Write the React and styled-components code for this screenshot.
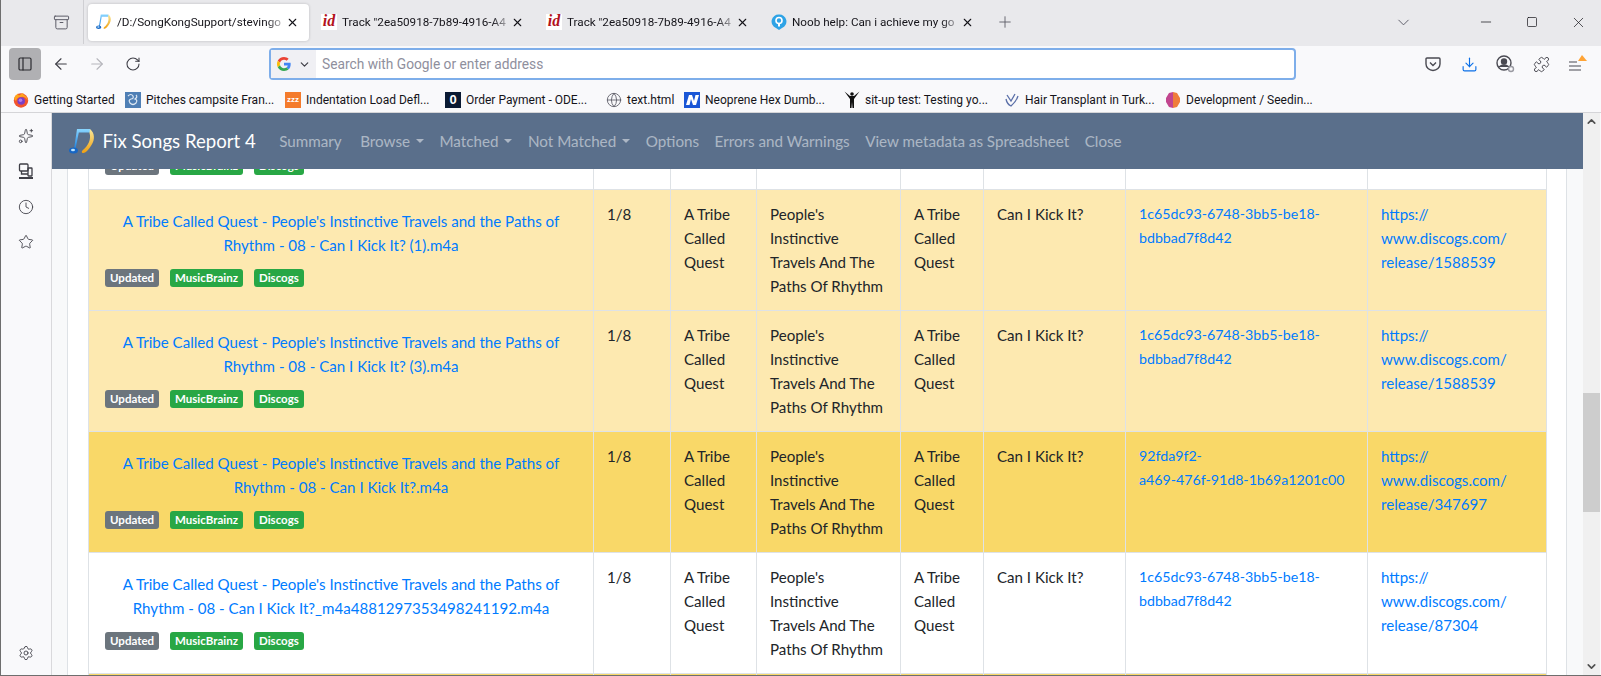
import React from 'react';
import styled, { createGlobalStyle } from 'styled-components';
import { Archive, ArrowLeft, ArrowRight, RotateCw, X, Plus, ChevronDown, Minus, Square, PanelLeft, Download, Puzzle, Sparkles, Clock, Star, Settings, Globe, ChevronUp } from 'lucide-react';

const GlobalStyle = createGlobalStyle`
  html, body { margin: 0; padding: 0; height: 100%; overflow: hidden; }
  body { font-family: Roboto, sans-serif; background: #f9f9fb; }
`;

const MusicLogo = ({ size = 16, id = 'a' }) => (
  <svg width={size} height={size} viewBox="0 0 27 27">
    <defs>
      <linearGradient id={`blue${id}`} x1="0" y1="0" x2="0" y2="1">
        <stop offset="0" stopColor="#8ad6ff" />
        <stop offset="1" stopColor="#1a7fe0" />
      </linearGradient>
      <linearGradient id={`gold${id}`} x1="0" y1="0" x2="0" y2="1">
        <stop offset="0" stopColor="#f9e89a" />
        <stop offset="1" stopColor="#f0a010" />
      </linearGradient>
    </defs>
    <path d="M8 1 H21 L21.500 4.500 H9.800 L6.500 21 H5 Z" fill={`url(#blue${id})`} />
    <ellipse cx="4.500" cy="22.500" rx="4.500" ry="3" fill="#1766c4" />
    <ellipse cx="4" cy="22" rx="2" ry="1.200" fill="#bfe6ff" />
    <path d="M21 1 C26 5 26 12 22.500 17 C20 21 17 25 14.500 25 C12 25 12.500 23 14.500 21.500 C19 18 22.500 11 20.500 5 Z" fill={`url(#gold${id})`} />
  </svg>
);

const tabs = [
  { title: '/D:/SongKongSupport/stevingo', icon: 'music', active: true },
  { title: 'Track "2ea50918-7b89-4916-A4', icon: 'id' },
  { title: 'Track "2ea50918-7b89-4916-A4', icon: 'id' },
  { title: 'Noob help: Can i achieve my go', icon: 'noob' },
];

const marks = [
  { label: 'Getting Started', w: 112, kind: 'fox' },
  { label: 'Pitches campsite Fran...', w: 160, kind: 'pitch' },
  { label: 'Indentation Load Defl...', w: 160, kind: 'zzz' },
  { label: 'Order Payment - ODE...', w: 161, kind: 'zero' },
  { label: 'text.html', w: 78, kind: 'globe' },
  { label: 'Neoprene Hex Dumb...', w: 160, kind: 'n' },
  { label: 'sit-up test: Testing yo...', w: 160, kind: 'man' },
  { label: 'Hair Transplant in Turk...', w: 161, kind: 'hair' },
  { label: 'Development / Seedin...', w: 160, kind: 'dev' },
];

const rows = [
  { file: "A Tribe Called Quest - People's Instinctive Travels and the Paths of Rhythm - 08 - Can I Kick It? (1).m4a", mb: ['1c65dc93-6748-3bb5-be18-', 'bdbbad7f8d42'], rel: '1588539', tone: 'light' },
  { file: "A Tribe Called Quest - People's Instinctive Travels and the Paths of Rhythm - 08 - Can I Kick It? (3).m4a", mb: ['1c65dc93-6748-3bb5-be18-', 'bdbbad7f8d42'], rel: '1588539', tone: 'light' },
  { file: "A Tribe Called Quest - People's Instinctive Travels and the Paths of Rhythm - 08 - Can I Kick It?.m4a", mb: ['92fda9f2-', 'a469-476f-91d8-1b69a1201c00'], rel: '347697', tone: 'dark' },
  { file: "A Tribe Called Quest - People's Instinctive Travels and the Paths of Rhythm - 08 - Can I Kick It?_m4a4881297353498241192.m4a", mb: ['1c65dc93-6748-3bb5-be18-', 'bdbbad7f8d42'], rel: '87304', tone: 'white' },
];

const toneColor = { light: '#fde9b0', dark: '#f9d868', white: '#ffffff' };

function Favicon({ kind }) {
  if (kind === 'fox') return (
    <svg width="16" height="16" viewBox="0 0 16 16">
      <circle cx="8" cy="8.500" r="7.200" fill="#f2542d" />
      <path d="M1 7 Q2 3 5 1.500 Q5 3 6 3.500 Q8 2 10 1 Q10 3 12.500 4 Q15 6 15 9 Q12 4 8 5 Q4 5 3 9 Z" fill="#ffa41c" />
      <circle cx="8.200" cy="9" r="3.800" fill="#7a3fc6" />
      <circle cx="7.500" cy="8.200" r="1.800" fill="#b47ae8" />
    </svg>
  );
  if (kind === 'pitch') return (
    <svg width="16" height="16" viewBox="0 0 16 16">
      <rect width="16" height="16" fill="#4f7fb5" />
      <path d="M3 4 Q6 1 8 4 Q9 7 6 7 Q3 8 5 11 Q8 14 11 11 Q13 8 10 7 Q13 5 11 3" stroke="#dfe9f4" strokeWidth="1.200" fill="none" />
    </svg>
  );
  if (kind === 'zzz') return <Zzz>zzz</Zzz>;
  if (kind === 'zero') return <Zero>0</Zero>;
  if (kind === 'globe') return <Globe size={16} color="#5b5b66" strokeWidth={1.3} />;
  if (kind === 'n') return <svg width="16" height="16" viewBox="0 0 16 16"><rect width="16" height="16" fill="#1a56d6" /><path d="M2 13 L5 3 H8 L10 9 L11.500 3 H15 L12 13 H9 L7 7 L5.500 13 Z" fill="#fff" /></svg>;
  if (kind === 'man') return <svg width="16" height="18" viewBox="0 0 16 18"><circle cx="8" cy="3" r="1.800" fill="#111" /><path d="M0.500 0.500 L6 5 H10 L15.500 0.500 L10 8 L10 17 H8.500 L8 11 L7.500 17 H6 L6 8 Z" fill="#111" /></svg>;
  if (kind === 'hair') return <svg width="16" height="16" viewBox="0 0 16 16" fill="none" stroke="#5a6fa8" strokeWidth="1.300"><path d="M2 7 Q3 12 7 14 Q12 10 14 4" /><path d="M3 3 L7 9 L11 2" /></svg>;
  if (kind === 'dev') return <svg width="14" height="16" viewBox="0 0 14 16"><path d="M7 0 L11 1 L14 6 V10 L11 15 L7 16 Z" fill="#ef7d3b" /><path d="M7 0 L3 1 L0 6 V10 L3 15 L7 16 Z" fill="#c2458f" /></svg>;
  return null;
}

function TabIcon({ icon, id }) {
  if (icon === 'music') return <MusicLogo size={16} id={id} />;
  if (icon === 'id') return <IdIcon>id</IdIcon>;
  return <svg width="16" height="16" viewBox="0 0 16 16"><path d="M8 0.500 A7 7 0 0 1 11 14 L8 16 L5 14 A7 7 0 0 1 8 0.500 Z" fill="#2ea3e6" /><circle cx="8" cy="6.500" r="3" fill="none" stroke="#fff" strokeWidth="1.600" /><rect x="7" y="10" width="2" height="2.500" fill="#fff" /></svg>;
}

const SyncedTabs = () => (
  <svg width="16" height="17" viewBox="0 0 16 17" fill="none" stroke="#3e3e46" strokeWidth="1.300">
    <rect x="1.500" y="1" width="8.500" height="7" rx="1" />
    <path d="M3.500 8 V11 H10" />
    <rect x="10" y="5" width="4" height="8" rx=".5" />
    <path d="M1 15 H15" strokeWidth="2" />
  </svg>
);

const MoreBadges = ({ clipped }) => (
  <Badges $clipped={clipped}>
    <Badge $kind="gray">Updated</Badge>
    <Badge>MusicBrainz</Badge>
    <Badge>Discogs</Badge>
  </Badges>
);

function App() {
  return (
    <>
      <GlobalStyle />
      <Window>
        <TabStrip>
          <ListAll><Archive size={17} strokeWidth={1.4} /></ListAll>
          {tabs.map((t, i) => (
            <Tab key={i} $active={t.active}>
              <TabIcon icon={t.icon} id={`t${i}`} />
              <TabTitle>{t.title}</TabTitle>
              <X size={13} strokeWidth={2} />
            </Tab>
          ))}
          <NewTab><Plus size={18} strokeWidth={1.2} /></NewTab>
          <Spacer />
          <TabsMenu><ChevronDown size={19} strokeWidth={1.2} color="#5b5b66" /></TabsMenu>
          <WinButton><Minus size={16} strokeWidth={1.1} /></WinButton>
          <WinButton><Square size={12} strokeWidth={1.4} /></WinButton>
          <WinButton><X size={17} strokeWidth={1} /></WinButton>
        </TabStrip>
        <Toolbar>
          <SideToggle><PanelLeft size={16} strokeWidth={1.8} /></SideToggle>
          <NavIcons>
            <IconSlot><ArrowLeft size={18} strokeWidth={1.5} color="#3e3e46" /></IconSlot>
            <IconSlot><ArrowRight size={18} strokeWidth={1.5} color="#b5b5bb" /></IconSlot>
            <IconSlot><RotateCw size={16} strokeWidth={1.6} color="#3e3e46" /></IconSlot>
          </NavIcons>
          <UrlBar>
            <Engine>
              <svg width="14" height="14" viewBox="0 0 48 48">
                <path fill="#EA4335" d="M24 9.500c3.500 0 6.700 1.300 9.100 3.400l6.800-6.800C35.900 2.400 30.400 0 24 0 14.600 0 6.500 5.400 2.600 13.200l7.900 6.200C12.400 13.700 17.700 9.500 24 9.500z" />
                <path fill="#4285F4" d="M46.900 24.500c0-1.600-.1-3.100-.4-4.500H24v9h12.900c-.6 3-2.200 5.500-4.700 7.200l7.700 6c4.500-4.200 7-10.300 7-17.700z" />
                <path fill="#FBBC05" d="M10.500 28.600c-.5-1.400-.8-3-.8-4.600s.3-3.200.8-4.600l-7.900-6.200C.9 16.500 0 20.100 0 24s.9 7.500 2.600 10.800l7.900-6.200z" />
                <path fill="#34A853" d="M24 48c6.500 0 11.900-2.100 15.900-5.800l-7.700-6c-2.100 1.400-4.900 2.300-8.200 2.300-6.300 0-11.600-4.200-13.500-9.900l-7.900 6.200C6.500 42.600 14.600 48 24 48z" />
              </svg>
              <ChevronDown size={13} strokeWidth={2.2} color="#3e3e46" />
            </Engine>
            <UrlText>Search with Google or enter address</UrlText>
          </UrlBar>
          <RightIcons>
            <IconSlot><svg width="16" height="16" viewBox="0 0 16 16" fill="none" stroke="#4a4a52" strokeWidth="1.400"><path d="M2 2 H14 Q15 2 15 3 V8 A7 6.500 0 0 1 1 8 V3 Q1 2 2 2 Z" /><path d="M5 6.500 L8 9.500 L11 6.500" /></svg></IconSlot>
            <IconSlot><Download size={17} color="#0a6fe8" strokeWidth={1.6} /></IconSlot>
            <IconSlot><svg width="19" height="18" viewBox="0 0 19 18" fill="none" stroke="#4a4a52" strokeWidth="1.400"><circle cx="8" cy="8" r="7" /><circle cx="8" cy="6.500" r="2.500" fill="#4a4a52" /><path d="M3 12 Q8 8 13 12" fill="#4a4a52" /><circle cx="15" cy="14" r="2.500" fill="#f9f9fb" stroke="#9a9aa2" /></svg></IconSlot>
            <IconSlot><Puzzle size={17} color="#4a4a52" strokeWidth={1.4} /></IconSlot>
            <IconSlot><svg width="19" height="18" viewBox="0 0 19 18"><path d="M1 7 H9 M1 11 H13 M1 15 H13" stroke="#4a4a52" strokeWidth="1.200" /><path d="M14 0 L19 6 H10 Z" fill="#ffa436" /></svg></IconSlot>
          </RightIcons>
        </Toolbar>
        <Bookmarks>
          {marks.map((m, i) => (
            <Mark key={i} $w={m.w}>
              <MarkIcon><Favicon kind={m.kind} /></MarkIcon>
              <MarkText>{m.label}</MarkText>
            </Mark>
          ))}
        </Bookmarks>
        <Body>
          <Sidebar>
            <SideTop>
              <Sparkles size={16} strokeWidth={1.3} />
              <SyncedTabs />
              <Clock size={16} strokeWidth={1.3} />
              <Star size={16} strokeWidth={1.3} />
            </SideTop>
            <Settings size={16} strokeWidth={1.3} />
          </Sidebar>
          <Page>
            <Header>
              <MusicLogo size={27} id="logo" />
              <Brand>Fix Songs Report 4</Brand>
              <NavItem $after={3}>Summary</NavItem>
              <NavItem>Browse<Caret /></NavItem>
              <NavItem>Matched<Caret /></NavItem>
              <NavItem>Not Matched<Caret /></NavItem>
              <NavItem>Options</NavItem>
              <NavItem>Errors and Warnings</NavItem>
              <NavItem>View metadata as Spreadsheet</NavItem>
              <NavItem>Close</NavItem>
            </Header>
            <Scroller>
              <Container>
                <ReportTable>
                  <colgroup>
                    <col style={{ width: 505 }} />
                    <col style={{ width: 77 }} />
                    <col style={{ width: 86 }} />
                    <col style={{ width: 144 }} />
                    <col style={{ width: 83 }} />
                    <col style={{ width: 142 }} />
                    <col style={{ width: 242 }} />
                    <col />
                  </colgroup>
                  <tbody>
                    <Row $tone="white" $short>
                      <Cell $center $cut><MoreBadges clipped /></Cell>
                      <Cell $cut /><Cell $cut /><Cell $cut /><Cell $cut /><Cell $cut /><Cell $cut /><Cell $cut />
                    </Row>
                    {rows.map((r, i) => (
                      <Row key={i} $tone={r.tone}>
                        <Cell $center>
                          <Name href="#">{r.file}</Name>
                          <MoreBadges />
                        </Cell>
                        <Cell>1/8</Cell>
                        <Cell>A Tribe Called Quest</Cell>
                        <Cell>People's Instinctive Travels And The Paths Of Rhythm</Cell>
                        <Cell>A Tribe Called Quest</Cell>
                        <Cell>Can I Kick It?</Cell>
                        <Cell><MbLink href="#">{r.mb[0]}<br />{r.mb[1]}</MbLink></Cell>
                        <Cell><CellLink href="#">https://<br />www.discogs.com/<br />release/{r.rel}</CellLink></Cell>
                      </Row>
                    ))}
                    <Row $tone="dark"><Cell /><Cell /><Cell /><Cell /><Cell /><Cell /><Cell /><Cell /></Row>
                  </tbody>
                </ReportTable>
              </Container>
            </Scroller>
          </Page>
          <ScrollBar>
            <ScrollArrow><ChevronUp size={13} strokeWidth={3} color="#505050" /></ScrollArrow>
            <Track><Thumb /></Track>
            <ScrollArrow><ChevronDown size={13} strokeWidth={3} color="#505050" /></ScrollArrow>
          </ScrollBar>
        </Body>
      </Window>
    </>
  );
}

export default App;

const Window = styled.div`
  width: 1601px;
  height: 676px;
  box-sizing: border-box;
  border-left: 1px solid #6e6e6e;
  border-bottom: 1px solid #6e6e6e;
  display: flex;
  flex-direction: column;
  overflow: hidden;
  background: #f9f9fb;
`;

const TabStrip = styled.div`
  height: 46px;
  flex: none;
  box-sizing: border-box;
  padding-bottom: 2px;
  background: #e9e9ec;
  display: flex;
  align-items: center;
  color: #15141a;
`;

const ListAll = styled.div`
  width: 83px;
  height: 44px;
  flex: none;
  box-sizing: border-box;
  border-right: 1px solid #cfcfd3;
  display: flex;
  align-items: center;
  justify-content: flex-end;
  padding-right: 13px;
  color: #5b5b66;
  margin-right: 4px;
`;

const Tab = styled.div`
  width: 221px;
  height: 37px;
  flex: none;
  margin-right: 4px;
  box-sizing: border-box;
  padding: 0 10px 0 8px;
  border-radius: 4px;
  display: flex;
  align-items: center;
  background: ${p => (p.$active ? '#fff' : 'transparent')};
  box-shadow: ${p => (p.$active ? '0 0 3px rgba(0,0,0,.2)' : 'none')};
`;

const TabTitle = styled.span`
  flex: 1;
  margin: 0 3px 0 5px;
  overflow: hidden;
  white-space: nowrap;
  font-size: 11.700px;
  -webkit-mask-image: linear-gradient(to right, #000 90%, rgba(0,0,0,.25));
  mask-image: linear-gradient(to right, #000 90%, rgba(0,0,0,.25));
`;

const IdIcon = styled.span`
  width: 16px;
  height: 16px;
  flex: none;
  background: #fff;
  color: #b3121d;
  font: italic bold 16px/14px "Liberation Serif", serif;
  text-align: center;
`;

const NewTab = styled.div`
  width: 34px;
  display: flex;
  justify-content: center;
  color: #5b5b66;
`;

const Spacer = styled.div`
  flex: 1;
`;

const TabsMenu = styled.div`
  display: flex;
  margin-right: 50px;
`;

const WinButton = styled.div`
  width: 46px;
  flex: none;
  display: flex;
  justify-content: center;
`;

const Toolbar = styled.div`
  height: 36px;
  flex: none;
  display: flex;
  align-items: center;
  padding-left: 8px;
`;

const SideToggle = styled.div`
  width: 32px;
  height: 32px;
  flex: none;
  border-radius: 4px;
  background: #b0b0b3;
  display: flex;
  align-items: center;
  justify-content: center;
  color: #2b2b30;
`;

const NavIcons = styled.div`
  width: 228px;
  flex: none;
  box-sizing: border-box;
  padding-left: 2px;
  display: flex;
  align-items: center;
`;

const IconSlot = styled.div`
  width: 36px;
  flex: none;
  display: flex;
  align-items: center;
  justify-content: center;
`;

const UrlBar = styled.div`
  width: 1027px;
  height: 32px;
  flex: none;
  box-sizing: border-box;
  border: 2px solid #7eaeea;
  border-radius: 4px;
  background: #fff;
  display: flex;
  align-items: center;
`;

const Engine = styled.div`
  width: 45px;
  height: 28px;
  flex: none;
  background: #f0f0f4;
  display: flex;
  align-items: center;
  justify-content: center;
  gap: 7px;
`;

const UrlText = styled.span`
  margin-left: 6px;
  font-size: 13.750px;
  color: #8f8f9d;
`;

const RightIcons = styled.div`
  flex: 1;
  display: flex;
  align-items: center;
  justify-content: flex-end;
  padding-right: 6px;
`;

const Bookmarks = styled.div`
  height: 31px;
  flex: none;
  box-sizing: border-box;
  padding: 5px 0 0 12px;
  display: flex;
  align-items: center;
  border-bottom: 1px solid #d5d5d8;
`;

const Mark = styled.div`
  width: ${p => p.$w}px;
  flex: none;
  display: flex;
  align-items: center;
  gap: 5px;
`;

const MarkIcon = styled.div`
  width: 16px;
  height: 16px;
  flex: none;
  display: flex;
  align-items: center;
  justify-content: center;
`;

const MarkText = styled.span`
  font-size: 12px;
  color: #15141a;
  white-space: nowrap;
`;

const Zzz = styled.span`
  width: 16px;
  height: 16px;
  background: #f47b2c;
  color: #fff;
  font: bold 8px/16px "Liberation Sans", sans-serif;
  text-align: center;
`;

const Zero = styled.span`
  width: 16px;
  height: 16px;
  background: #0a1a33;
  color: #fff;
  font: bold 13px/16px "Liberation Sans", sans-serif;
  text-align: center;
`;

const Body = styled.div`
  flex: 1;
  min-height: 0;
  display: flex;
`;

const Sidebar = styled.div`
  width: 51px;
  flex: none;
  box-sizing: border-box;
  border-right: 1px solid #d9d9dc;
  padding: 15px 0 14px;
  display: flex;
  flex-direction: column;
  align-items: center;
  justify-content: space-between;
  color: #3e3e46;
`;

const SideTop = styled.div`
  display: flex;
  flex-direction: column;
  align-items: center;
  gap: 19px;
`;

const Page = styled.div`
  width: 1531px;
  flex: none;
  display: flex;
  flex-direction: column;
  min-height: 0;
`;

const Header = styled.div`
  height: 56px;
  flex: none;
  background: #5a6f8b;
  display: flex;
  align-items: center;
  padding-left: 17px;
  gap: 15.500px;
`;

const Brand = styled.span`
  font-family: Lato, sans-serif;
  font-size: 18.600px;
  color: #fff;
  margin-left: -9px;
  margin-right: 8px;
`;

const NavItem = styled.span`
  font-family: Lato, sans-serif;
  font-size: 15.200px;
  color: rgba(255, 255, 255, 0.5);
  display: flex;
  align-items: center;
  margin-right: ${p => p.$after || 0}px;
`;

const Caret = styled.i`
  width: 0;
  height: 0;
  margin-left: 6px;
  border-top: 4px solid currentColor;
  border-left: 4px solid transparent;
  border-right: 4px solid transparent;
`;

const Scroller = styled.div`
  flex: 1;
  min-height: 0;
  overflow: hidden;
  background: #f8f9fa;
  padding: 0 16px 0 15px;
`;

const Container = styled.div`
  background: #fff;
  border-left: 1px solid #dee2e6;
  border-right: 1px solid #dee2e6;
  padding: 0 20px;
  height: 100%;
  overflow: hidden;
`;

const ReportTable = styled.table`
  width: 1459px;
  table-layout: fixed;
  border-collapse: collapse;
`;

const Row = styled.tr`
  height: ${p => (p.$short ? 20 : 121)}px;
  background: ${p => toneColor[p.$tone]};
`;

const Cell = styled.td`
  box-sizing: border-box;
  border: 1px solid #dee2e6;
  border-top-width: ${p => (p.$cut ? 0 : 1)}px;
  padding: ${p => (p.$cut ? 0 : '12px')} 13px;
  vertical-align: top;
  font-family: Lato, sans-serif;
  font-size: 15.100px;
  line-height: 24px;
  color: #212529;
  text-align: ${p => (p.$center ? 'center' : 'left')};
`;

const Name = styled.a`
  display: block;
  color: #007bff;
  text-decoration: none;
  padding-top: 7px;
`;

const CellLink = styled.a`
  color: #007bff;
  text-decoration: none;
`;

const MbLink = styled(CellLink)`
  display: block;
  font-size: 14.200px;
  white-space: nowrap;
`;

const Badges = styled.div`
  display: flex;
  gap: 11px;
  padding-left: 3px;
  margin-top: ${p => (p.$clipped ? -12 : 12)}px;
`;

const Badge = styled.span`
  height: 18px;
  padding: 0 5px;
  border-radius: 3px;
  font-size: 11.500px;
  font-weight: 700;
  line-height: 18px;
  color: #fff;
  background: ${p => (p.$kind === 'gray' ? '#6c757d' : '#28a745')};
`;

const ScrollBar = styled.div`
  width: 17px;
  flex: none;
  background: #f0f0f0;
  display: flex;
  flex-direction: column;
`;

const ScrollArrow = styled.div`
  height: 17px;
  flex: none;
  display: flex;
  align-items: center;
  justify-content: center;
`;

const Track = styled.div`
  flex: 1;
  padding-top: 263px;
`;

const Thumb = styled.div`
  height: 119px;
  background: #cdcdcd;
`;
